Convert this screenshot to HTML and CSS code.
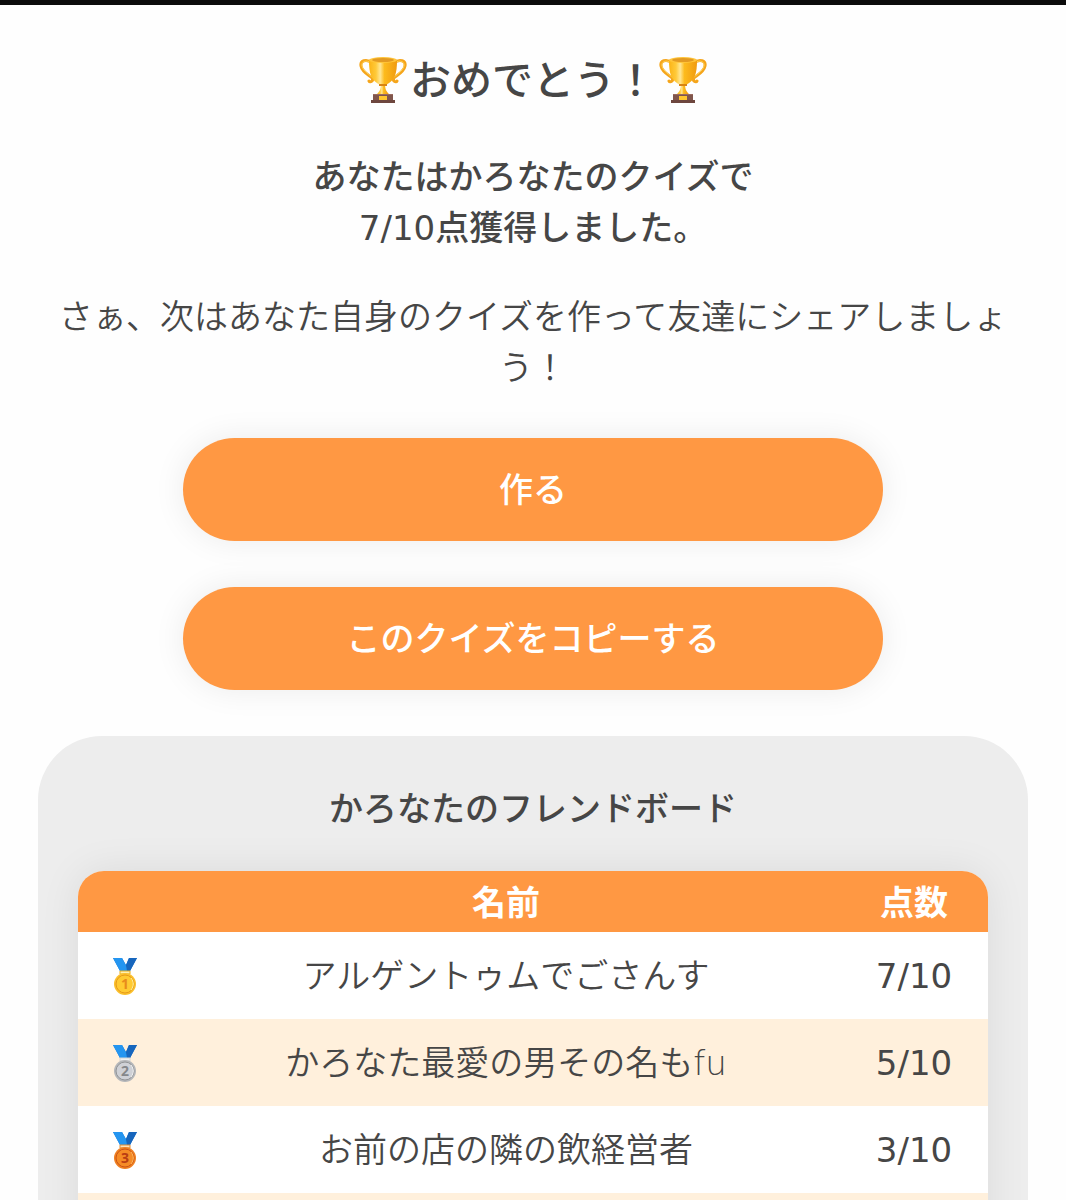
FILE: index.html
```
<!DOCTYPE html>
<html lang="ja">
<head>
    <meta charset="UTF-8">
    <meta name="viewport" content="width=device-width, initial-scale=1.0">
    <title>フレンドクイズ</title>
    <link rel="stylesheet" href="styles.css">
</head>
<body>
    <!-- shared icons -->
    <svg class="defs" width="0" height="0" aria-hidden="true">
        <defs>
            <linearGradient id="gold">
                <stop offset="0" stop-color="#fbb316"/>
                <stop offset="0.25" stop-color="#ffca3a"/>
                <stop offset="0.4" stop-color="#ffe694"/>
                <stop offset="0.55" stop-color="#fdbb1d"/>
                <stop offset="1" stop-color="#f09a10"/>
            </linearGradient>
            <symbol id="trophy" viewBox="0 0 48 48">
                <path d="M13 7C7 2 1 5 2 10c1 6 9 10 11 12 2 3-2 5-3 3M35 7c6-5 12-2 11 3-1 6-9 10-11 12-2 3 2 5 3 3" fill="none" stroke="#f5a51b" stroke-width="3" stroke-linecap="round"/>
                <path d="M12 7C7 3 2 6 3 10c1 5 8 9 11 12M36 7c5-4 10-1 9 3-1 5-8 9-11 12" fill="none" stroke="#ffd25a" stroke-width="1"/>
                <path d="M22 27h4c0 6 1 8 4 11H18c3-3 4-5 4-11z" fill="url(#gold)"/>
                <path d="M10 4c0 14 2 20 11 25h6c9-5 11-11 11-25z" fill="url(#gold)"/>
                <ellipse cx="24" cy="4" rx="14" ry="3" fill="#ffc53a"/>
                <ellipse cx="24" cy="4" rx="11" ry="2" fill="#e39a22"/>
                <path d="M20 28h8v2h-8z" fill="#d98514"/>
                <path d="M14 38h20v7H14z" fill="#80564c"/>
                <path d="M14 38h20v1H14z" fill="#9a6c60"/>
                <path d="M12 44h24v3H12z" fill="#6d463e"/>
                <path d="M20 40h8v4h-8z" fill="#ffc62d"/>
            </symbol>
            <symbol id="ribbon" viewBox="0 0 24 38">
                <path d="M0 0h9l4 7 3-7h8l-7 13H7z" fill="#1877d2"/>
                <path d="M0 0h9l7 13H7z" fill="#2495f0"/>
                <path d="M16 0h8l-7 13h-3l-1-6z" fill="#1766bd"/>
            </symbol>
        </defs>
    </svg>

    <main>
        <h1>
            <svg class="trophy" aria-hidden="true"><use href="#trophy"/></svg>
            <span>おめでとう！</span>
            <svg class="trophy" aria-hidden="true"><use href="#trophy"/></svg>
        </h1>
        <h2>あなたはかろなたのクイズで<br>7/10点獲得しました。</h2>
        <p>さぁ、次はあなた自身のクイズを作って友達にシェアしましょう！</p>

        <div class="buttons">
            <button type="button">作る</button>
            <button type="button">このクイズをコピーする</button>
        </div>

        <section class="board">
            <h2>かろなたのフレンドボード</h2>
            <table>
                <thead>
                    <tr>
                        <th class="rank"></th>
                        <th>名前</th>
                        <th class="score">点数</th>
                    </tr>
                </thead>
                <tbody>
                    <tr>
                        <td>
                            <svg class="medal" viewBox="0 0 24 38" role="img">
                                <use href="#ribbon"/>
                                <path d="M7 13h10v3H7z" fill="#fff0b0" stroke="#e8ac1c"/>
                                <circle cx="12" cy="26" r="11" fill="#fbc02d"/>
                                <circle cx="12" cy="26" r="9" fill="#ffca32" stroke="#e69a19" stroke-width="1"/>
                                <path d="M18 20c3 4 3 8 0 12" fill="none" stroke="#fff0a0" stroke-width="1"/>
                                <text x="12" y="31" class="digit gold">1</text>
                            </svg>
                        </td>
                        <td>アルゲントゥムでごさんす</td>
                        <td>7/10</td>
                    </tr>
                    <tr>
                        <td>
                            <svg class="medal" viewBox="0 0 24 38" role="img">
                                <use href="#ribbon"/>
                                <path d="M7 13h10v3H7z" fill="#f1f1f1" stroke="#d4d4d4"/>
                                <circle cx="12" cy="26" r="11" fill="#b5b7ba"/>
                                <circle cx="12" cy="26" r="9" fill="#cfd1d6" stroke="#929496" stroke-width="1"/>
                                <path d="M18 20c3 4 3 8 0 12" fill="none" stroke="#f1f1f1" stroke-width="1"/>
                                <text x="12" y="31" class="digit silver">2</text>
                            </svg>
                        </td>
                        <td>かろなた最愛の男その名もfu</td>
                        <td>5/10</td>
                    </tr>
                    <tr>
                        <td>
                            <svg class="medal" viewBox="0 0 24 38" role="img">
                                <use href="#ribbon"/>
                                <path d="M7 13h10v3H7z" fill="#ffe0b5" stroke="#df8c35"/>
                                <circle cx="12" cy="26" r="11" fill="#ef8022"/>
                                <circle cx="12" cy="26" r="9" fill="#f58b26" stroke="#cc5415" stroke-width="1"/>
                                <path d="M18 20c3 4 3 8 0 12" fill="none" stroke="#ffb65c" stroke-width="1"/>
                                <text x="12" y="31" class="digit bronze">3</text>
                            </svg>
                        </td>
                        <td>お前の店の隣の飲経営者</td>
                        <td>3/10</td>
                    </tr>
                    <tr>
                        <td></td>
                        <td></td>
                        <td></td>
                    </tr>
                </tbody>
            </table>
        </section>
    </main>
</body>
</html>
```
FILE: styles.css
```
* {
    box-sizing: border-box;
}
body {
    margin: 0;
    border-top: 5px solid #0c0c0c;
    background: #fefefe;
    color: #464646;
    font-family: "DejaVu Sans", "Noto Sans CJK JP", sans-serif;
    font-size: 34px;
    font-weight: 350;
    line-height: 51px;
    text-align: center;
}
.defs {
    display: block;
}
main {
    padding: 43px 38px 0;
}
h1 {
    display: flex;
    justify-content: center;
    align-items: center;
    gap: 3px;
    margin: 0 0 40px;
    font-size: 41px;
    font-weight: 500;
    line-height: 62px;
}
h1 span {
    padding-top: 2px;
}
.trophy {
    width: 48px;
    height: 48px;
}
h2 {
    margin: 0;
    font-size: 34px;
    font-weight: 500;
}
p {
    margin: 38px 0 44px;
}
.buttons {
    display: flex;
    flex-direction: column;
    align-items: center;
    gap: 46px;
}
button {
    width: 100%;
    max-width: 700px;
    padding: 27px 26px 25px;
    border: 0;
    border-radius: 52px;
    background: #ff9843;
    box-shadow: 0 0 32px rgba(0, 0, 0, 0.08);
    color: #fff;
    font: inherit;
    font-weight: 500;
    cursor: pointer;
}
.board {
    margin-top: 46px;
    padding: 48px 40px 0;
    border-radius: 64px 64px 0 0;
    background: #ededed;
}
table {
    width: 100%;
    margin-top: 36px;
    border-collapse: collapse;
    border-radius: 26px 26px 0 0;
    overflow: hidden;
    table-layout: fixed;
    background: #fff;
    box-shadow: 0 0 40px rgba(0, 0, 0, 0.08);
}
th {
    height: 61px;
    padding: 4px 0 0;
    background: #ff9843;
    color: #fff;
    font-weight: 700;
}
td {
    height: 87px;
    padding: 2px 0 0;
}
td:last-child {
    font-weight: 400;
}
tbody tr:nth-child(even) {
    background: #fff0dc;
}
.rank {
    width: 94px;
}
.score {
    width: 148px;
}
.medal {
    display: block;
    width: 24px;
    height: 38px;
    margin: 0 auto;
}
.digit {
    font-family: "Noto Sans", sans-serif;
    font-size: 14px;
    font-weight: bold;
    text-anchor: middle;
}
.gold {
    fill: #e88b1c;
}
.silver {
    fill: #85878a;
}
.bronze {
    fill: #b93d13;
}
```
